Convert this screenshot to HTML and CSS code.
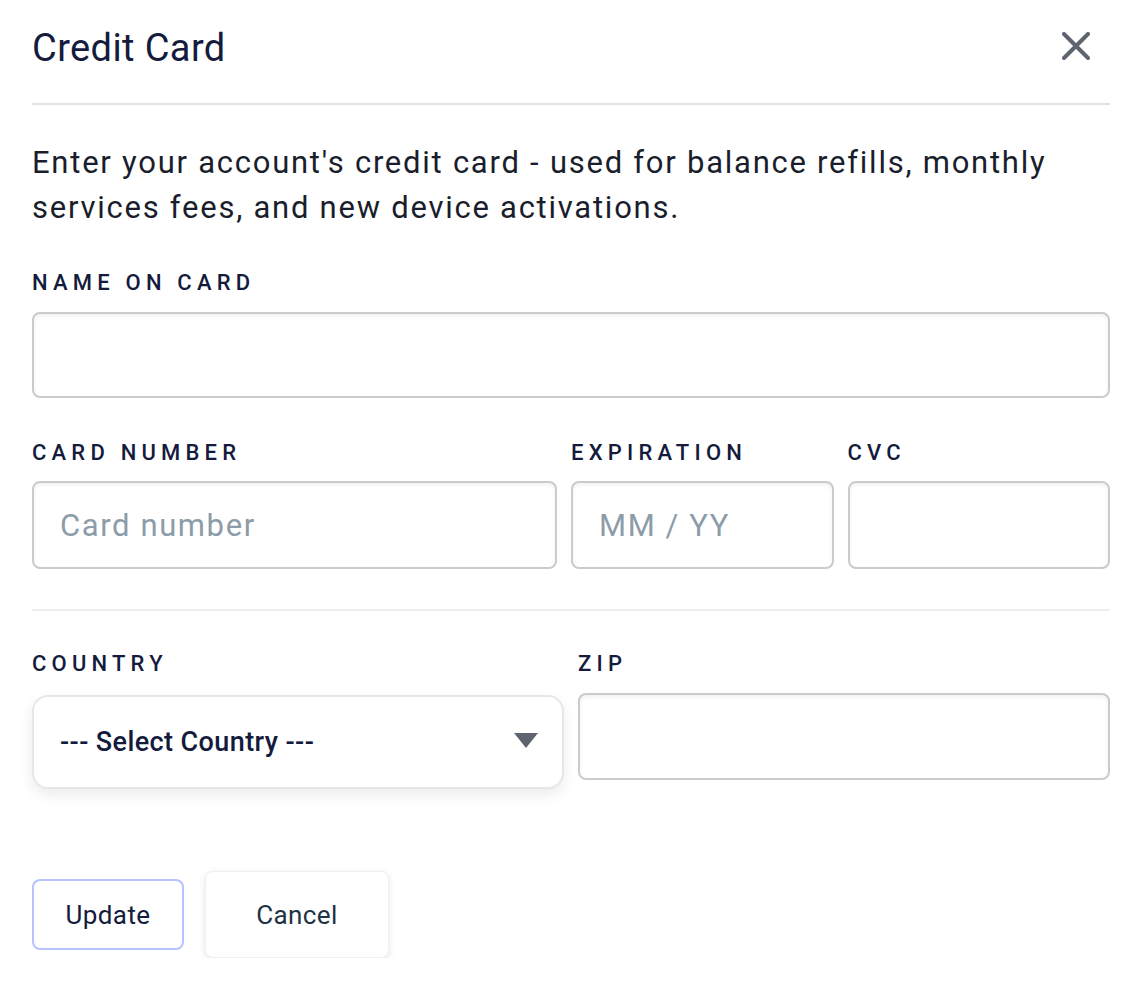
FILE: index.html
```html
<!DOCTYPE html>
<html lang="en">
<head>
<meta charset="utf-8">
<title>Credit Card</title>
<link rel="stylesheet" href="styles.css">
</head>
<body>
<div class="modal">
  <header class="modal-header">
    <h1 class="modal-title">Credit Card</h1>
    <button class="close-btn" aria-label="Close">
      <svg width="28" height="28" viewBox="0 0 28 28"><path d="M2 2 L26 26 M26 2 L2 26" stroke="#5f6470" stroke-width="4" stroke-linecap="round" fill="none"/></svg>
    </button>
  </header>
  <p class="intro">Enter your account's credit card - used for balance refills, monthly services fees, and new device activations.</p>

  <div class="field">
    <label class="label">NAME ON CARD</label>
    <input class="input input-name" type="text">
  </div>

  <div class="row row-card">
    <div class="field">
      <label class="label">CARD NUMBER</label>
      <input class="input input-tall" type="text" placeholder="Card number">
    </div>
    <div class="field">
      <label class="label">EXPIRATION</label>
      <input class="input input-tall" type="text" placeholder="MM / YY">
    </div>
    <div class="field">
      <label class="label">CVC</label>
      <input class="input input-tall" type="text">
    </div>
  </div>

  <hr class="sep">

  <div class="row row-country">
    <div class="field">
      <label class="label">COUNTRY</label>
      <div class="select-wrap">
        <select class="select">
          <option>--- Select Country ---</option>
        </select>
        <svg class="caret" width="24" height="15" viewBox="0 0 24 15"><path d="M0 0 H24 L12 15 Z" fill="#5f6470"/></svg>
      </div>
    </div>
    <div class="field">
      <label class="label">ZIP</label>
      <input class="input input-zip" type="text">
    </div>
  </div>

  <div class="actions">
    <button class="btn btn-update">Update</button>
    <button class="btn btn-cancel">Cancel</button>
  </div>
</div>
</body>
</html>
```

FILE: styles.css
```css
* { box-sizing: border-box; }
html, body { margin: 0; padding: 0; background: #ffffff; }
body { font-family: Roboto, "Liberation Sans", Arial, sans-serif; color: #141b3d; }

.modal { padding: 0 32px; width: 1142px; }

.modal-header {
  display: flex;
  align-items: center;
  justify-content: space-between;
  padding: 24px 0 31px;
  border-bottom: 2px solid #e2e2e2;
}
.modal-title {
  margin: 0;
  font-size: 38px;
  line-height: 48px;
  font-weight: 400;
  letter-spacing: 0.4px;
  color: #141b3d;
}
.close-btn {
  border: 0;
  background: transparent;
  padding: 0;
  margin-right: 20px;
  margin-top: -4px;
  width: 28px;
  height: 28px;
  display: flex;
}

.intro {
  margin: 35px 0 0;
  font-size: 31px;
  line-height: 45px;
  color: #1a1e2c;
  letter-spacing: 1.75px;
}

.field { display: flex; flex-direction: column; }
.label {
  display: block;
  font-size: 22px;
  line-height: 30px;
  letter-spacing: 5.2px;
  color: #141b3d;
  font-weight: 500;
}
.intro + .field .label { margin-top: 38px; }

.input {
  display: block;
  width: 100%;
  border: 2px solid #cbcbcb;
  border-radius: 8px;
  box-shadow: inset 0 2px 4px rgba(0, 0, 0, 0.06);
  background: #fff;
  font-family: inherit;
  font-size: 31px;
  letter-spacing: 1.6px;
  color: #141b3d;
  padding: 0 26px;
  outline: none;
  margin: 0;
}
.input::placeholder { color: #8c9ca8; }
.input-name { height: 86px; margin-top: 14px; }
.input-tall { height: 88px; margin-top: 13px; }
.input-zip { height: 87px; margin-top: 14px; }

.row { display: grid; gap: 14px; align-items: start; }
.row-card { grid-template-columns: 2fr 1fr 1fr; }
.row-country { grid-template-columns: 1fr 1fr; }
.row-card .label { margin-top: 40px; }
.row-country .label { margin-top: 38px; }

.sep {
  margin: 40px 0 0;
  border: 0;
  height: 2px;
  background: #ededf2;
}

.select-wrap { position: relative; margin-top: 16px; }
.select {
  display: block;
  width: 100%;
  height: 94px;
  appearance: none;
  -webkit-appearance: none;
  border: 2px solid #e7e7e7;
  border-radius: 16px;
  background: #fff;
  box-shadow: 0 6px 14px rgba(0, 0, 0, 0.08);
  font-family: inherit;
  font-size: 27px;
  font-weight: 500;
  letter-spacing: 0.4px;
  color: #141b3d;
  padding: 0 26px;
  outline: none;
}
.caret { position: absolute; right: 26px; top: 38px; pointer-events: none; }

.actions {
  display: flex;
  align-items: center;
  gap: 21px;
  margin-top: 82px;
}
.btn {
  font-family: inherit;
  font-size: 26px;
  letter-spacing: 0.4px;
  background: #fff;
  border-radius: 8px;
  cursor: pointer;
  padding: 0;
}
.btn-update {
  width: 152px;
  height: 71px;
  border: 2px solid #b5c4ff;
  color: #141b3d;
}
.btn-cancel {
  width: 184px;
  height: 87px;
  border: 1px solid #f0f0f0;
  box-shadow: 0 2px 7px rgba(0, 0, 0, 0.1);
  color: #1e3346;
}
```
